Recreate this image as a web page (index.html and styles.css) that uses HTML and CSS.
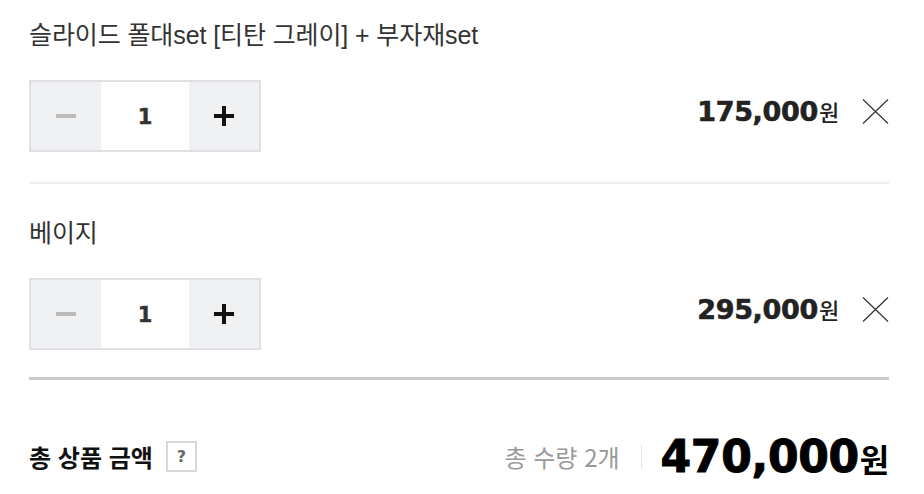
FILE: index.html
```html
<!DOCTYPE html>
<html lang="ko">
<head>
    <meta charset="UTF-8">
    <meta name="viewport" content="width=device-width, initial-scale=1.0">
    <title>선택 상품</title>
    <link rel="stylesheet" href="styles.css">
</head>
<body>
    <div class="cart">
        <div class="item">
            <div class="item-name">슬라이드 폴대set [티탄 그레이] + 부자재set</div>
            <div class="item-row">
                <div class="stepper">
                    <button class="step-btn minus" aria-label="수량 빼기"><span></span></button>
                    <div class="qty">1</div>
                    <button class="step-btn plus" aria-label="수량 더하기"><span></span></button>
                </div>
                <div class="item-right">
                    <div class="price">175,000<span class="won">원</span></div>
                    <button class="remove-btn" aria-label="삭제">
                        <svg width="27" height="25" viewBox="0 0 27 25"><path d="M1 0.5L26 24.5M26 0.5L1 24.5" stroke="#333" stroke-width="1.2" fill="none"/></svg>
                    </button>
                </div>
            </div>
        </div>

        <div class="item">
            <div class="item-name">베이지</div>
            <div class="item-row">
                <div class="stepper">
                    <button class="step-btn minus" aria-label="수량 빼기"><span></span></button>
                    <div class="qty">1</div>
                    <button class="step-btn plus" aria-label="수량 더하기"><span></span></button>
                </div>
                <div class="item-right">
                    <div class="price">295,000<span class="won">원</span></div>
                    <button class="remove-btn" aria-label="삭제">
                        <svg width="27" height="25" viewBox="0 0 27 25"><path d="M1 0.5L26 24.5M26 0.5L1 24.5" stroke="#333" stroke-width="1.2" fill="none"/></svg>
                    </button>
                </div>
            </div>
        </div>

        <div class="summary">
            <div class="summary-label">
                총 상품 금액
                <span class="help">?</span>
            </div>
            <div class="summary-right">
                <span class="total-count">총 수량 2개</span>
                <span class="divider"></span>
                <span class="total-price">470,000<span class="won">원</span></span>
            </div>
        </div>
    </div>
</body>
</html>
```

FILE: styles.css
```css
body {
    margin: 0;
    background: #fff;
    font-family: "Liberation Sans", "Noto Sans CJK KR", sans-serif;
    color: #333;
}

.cart {
    padding: 0 35px 0 29px;
}

.item {
    padding: 34px 0 30px;
    border-bottom: 2px solid #eeeeee;
}

.item:first-child {
    padding-top: 20px;
}

.item:nth-last-child(2) {
    padding-bottom: 27px;
    border-bottom: none;
}

.item-name {
    font-size: 25px;
    line-height: 30px;
    color: #333;
    letter-spacing: -0.1px;
}

.item-row {
    display: flex;
    justify-content: space-between;
    align-items: center;
    margin-top: 30px;
}

.stepper {
    display: flex;
    width: 228px;
    height: 68px;
    border: 2px solid #e0e0e4;
}

.step-btn {
    width: 70px;
    height: 68px;
    padding: 0;
    border: none;
    background: #f0f1f3;
    cursor: pointer;
    display: flex;
    align-items: center;
    justify-content: center;
}

.step-btn span {
    display: block;
    position: relative;
    width: 20px;
    height: 4px;
    background: #bbbbbb;
}

.plus span {
    background: #111;
}

.plus span::after {
    content: "";
    position: absolute;
    left: 8px;
    top: -8px;
    width: 4px;
    height: 20px;
    background: #111;
}

.qty {
    flex: 1;
    display: flex;
    align-items: center;
    justify-content: center;
    background: #fff;
    font-family: "DejaVu Sans", sans-serif;
    font-weight: bold;
    font-size: 21px;
    color: #333;
    padding-top: 1px;
    -webkit-text-stroke: 0.4px #333;
}

.item-right {
    display: flex;
    align-items: center;
    gap: 23px;
    margin-bottom: 10px;
}

.price {
    font-family: "DejaVu Sans", "Noto Sans CJK KR", sans-serif;
    font-weight: bold;
    font-size: 27px;
    color: #222;
    letter-spacing: -0.3px;
    -webkit-text-stroke: 0.6px #222;
}

.price .won {
    font-family: "Noto Sans CJK KR", sans-serif;
    font-weight: 500;
    font-size: 22px;
    margin-left: 1px;
    -webkit-text-stroke: 0;
}

.remove-btn {
    padding: 0;
    border: none;
    background: none;
    cursor: pointer;
    display: block;
    line-height: 0;
}

.summary {
    border-top: 3px solid #c9c9c9;
    padding-top: 51px;
    display: flex;
    justify-content: space-between;
    align-items: center;
    height: 50px;
}

.summary-label {
    display: flex;
    align-items: center;
    font-family: "Noto Sans CJK KR", sans-serif;
    font-weight: bold;
    font-size: 24px;
    color: #111;
}

.help {
    display: inline-flex;
    align-items: center;
    justify-content: center;
    width: 27px;
    height: 27px;
    margin-left: 13px;
    border: 2px solid #d8d8d8;
    font-family: "DejaVu Sans", sans-serif;
    font-size: 16px;
    font-weight: bold;
    color: #666;
}

.summary-right {
    display: flex;
    align-items: center;
}

.total-count {
    font-family: "Noto Sans CJK KR", sans-serif;
    font-size: 24px;
    color: #999;
}

.divider {
    width: 1px;
    height: 23px;
    background: #e2e2e2;
    margin: 0 19px 0 21px;
}

.total-price {
    font-family: "DejaVu Sans", sans-serif;
    font-weight: bold;
    font-size: 44px;
    color: #000;
    letter-spacing: -0.3px;
    -webkit-text-stroke: 1px #000;
}

.total-price .won {
    font-family: "Noto Sans CJK KR", sans-serif;
    font-size: 32px;
    margin-left: 1px;
    -webkit-text-stroke: 0;
}
```
